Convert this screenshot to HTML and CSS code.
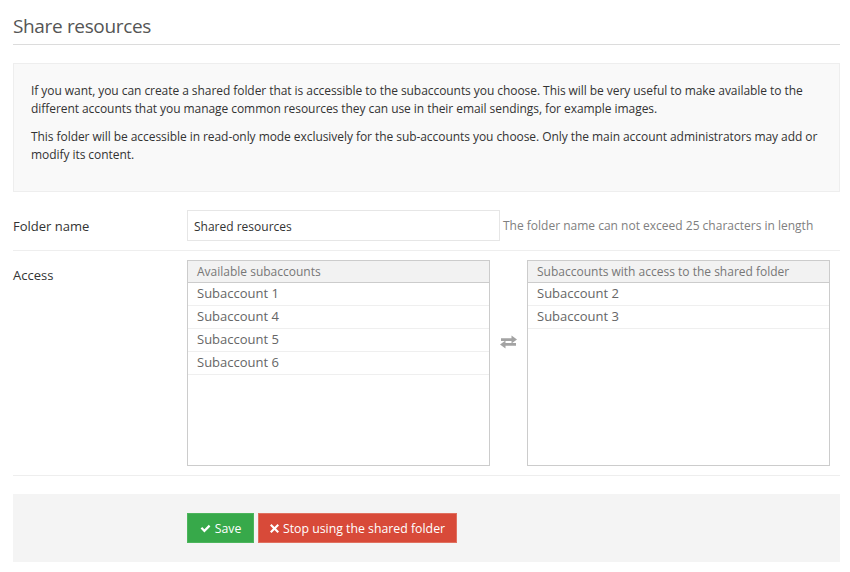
FILE: index.html
```html
<!DOCTYPE html>
<html lang="en">
<head>
<meta charset="utf-8">
<title>Share resources</title>
<link rel="stylesheet" href="styles.css">
</head>
<body>
<div class="page">
  <h1 class="title">Share resources</h1>

  <div class="info">
    <p>If you want, you can create a shared folder that is accessible to the subaccounts you choose. This will be very useful to make available to the different accounts that you manage common resources they can use in their email sendings, for example images.</p>
    <p>This folder will be accessible in read-only mode exclusively for the sub-accounts you choose. Only the main account administrators may add or modify its content.</p>
  </div>

  <div class="form">
    <div class="row row-name">
      <label class="label">Folder name</label>
      <div class="control inline">
        <input class="input" type="text" value="Shared resources">
        <span class="help">The folder name can not exceed 25 characters in length</span>
      </div>
    </div>

    <div class="row row-access">
      <div class="label">Access</div>
      <div class="control dual">
        <div class="list">
          <div class="list-head">Available subaccounts</div>
          <div class="item">Subaccount 1</div>
          <div class="item">Subaccount 4</div>
          <div class="item">Subaccount 5</div>
          <div class="item">Subaccount 6</div>
        </div>
        <div class="swap">
          <svg width="19" height="14" viewBox="0 0 19 14" aria-hidden="true">
            <path d="M2 3.2h10.5V0.6l5.5 4-5.5 4V6H2z" fill="#a3a3a3"/>
            <path d="M17 8H6.5V5.4L1 9.4l5.5 4v-2.6H17z" fill="#a3a3a3"/>
          </svg>
        </div>
        <div class="list">
          <div class="list-head">Subaccounts with access to the shared folder</div>
          <div class="item">Subaccount 2</div>
          <div class="item">Subaccount 3</div>
        </div>
      </div>
    </div>
  </div>

  <div class="actions">
    <button class="btn btn-save" type="button">
      <svg width="11" height="9" viewBox="0 0 11 9" aria-hidden="true"><path d="M0.6 4.6l1.6-1.6 2.2 2.2L8.8 0.8l1.6 1.6-6 6z" fill="#fff"/></svg>
      <span>Save</span>
    </button>
    <button class="btn btn-stop" type="button">
      <svg width="9" height="9" viewBox="0 0 9 9" aria-hidden="true"><path d="M1.5 0L4.5 3 7.5 0 9 1.5 6 4.5 9 7.5 7.5 9 4.5 6 1.5 9 0 7.5 3 4.5 0 1.5z" fill="#fff"/></svg>
      <span>Stop using the shared folder</span>
    </button>
  </div>
</div>
</body>
</html>
```

FILE: styles.css
```css
* { box-sizing: border-box; }

html, body {
  margin: 0;
  padding: 0;
  background: #fff;
}

body {
  font-family: "Open Sans", "Liberation Sans", sans-serif;
  font-size: 12px;
  color: #333;
}

.page {
  width: 827px;
  margin-left: 13px;
}

.title {
  margin: 0;
  padding-top: 12px;
  padding-bottom: 4px;
  font-size: 19px;
  line-height: 28px;
  font-weight: 400;
  color: #555;
  letter-spacing: -0.35px;
  border-bottom: 1px solid #dcdcdc;
}

.info {
  margin-top: 18px;
  background: #f9f9f9;
  border: 1px solid #eeeeee;
  padding: 18px 16px 16px 17px;
  min-height: 129px;
}

.info p {
  margin: 0 0 10px;
  font-size: 12px;
  line-height: 18px;
  color: #333;
  letter-spacing: -0.06px;
}

.form {
  margin-top: 18px;
}

.row {
  display: grid;
  grid-template-columns: 174px 1fr;
  border-bottom: 1px solid #eeeeee;
}

.row-name {
  padding-bottom: 9px;
  align-items: center;
}

.row-access {
  padding: 9px 0 9px;
}

.label {
  font-size: 13px;
  color: #333;
}

.row-access .label {
  padding-top: 6px;
}

.inline {
  display: flex;
  align-items: center;
  gap: 3px;
}

.input {
  width: 313px;
  height: 31px;
  border: 1px solid #e6e6e6;
  padding: 1px 6px 0;
  font-family: inherit;
  font-size: 12px;
  color: #333;
  background: #fff;
  outline: none;
}

.help {
  color: #808080;
  font-size: 12px;
}

.dual {
  display: flex;
  align-items: flex-start;
}

.list {
  width: 303px;
  height: 206px;
  border: 1px solid #cccccc;
  background: #fff;
}

.list-head {
  height: 22px;
  line-height: 21px;
  padding-left: 9px;
  background: #f2f2f2;
  border-bottom: 1px solid #cccccc;
  color: #777;
  font-size: 12px;
}

.item {
  height: 23px;
  line-height: 21px;
  padding-left: 9px;
  border-bottom: 1px solid #efefef;
  color: #666;
  font-size: 13px;
}

.swap {
  width: 37px;
  display: flex;
  justify-content: center;
  padding-top: 75px;
}

.actions {
  margin-top: 18px;
  background: #f4f4f4;
  height: 68px;
  padding: 19px 0 0 174px;
  display: flex;
  align-items: flex-start;
  gap: 4px;
}

.btn {
  height: 30px;
  border: 1px solid transparent;
  color: #fff;
  font-family: inherit;
  font-size: 12.3px;
  padding: 0;
  display: inline-flex;
  align-items: center;
  justify-content: center;
  gap: 4px;
  white-space: nowrap;
  cursor: pointer;
}

.btn-save {
  width: 67px;
  background: #37a94a;
  border-color: #4cb55c;
}

.btn-stop {
  width: 199px;
  background: #d84a39;
  border-color: #e0705f;
}
```
